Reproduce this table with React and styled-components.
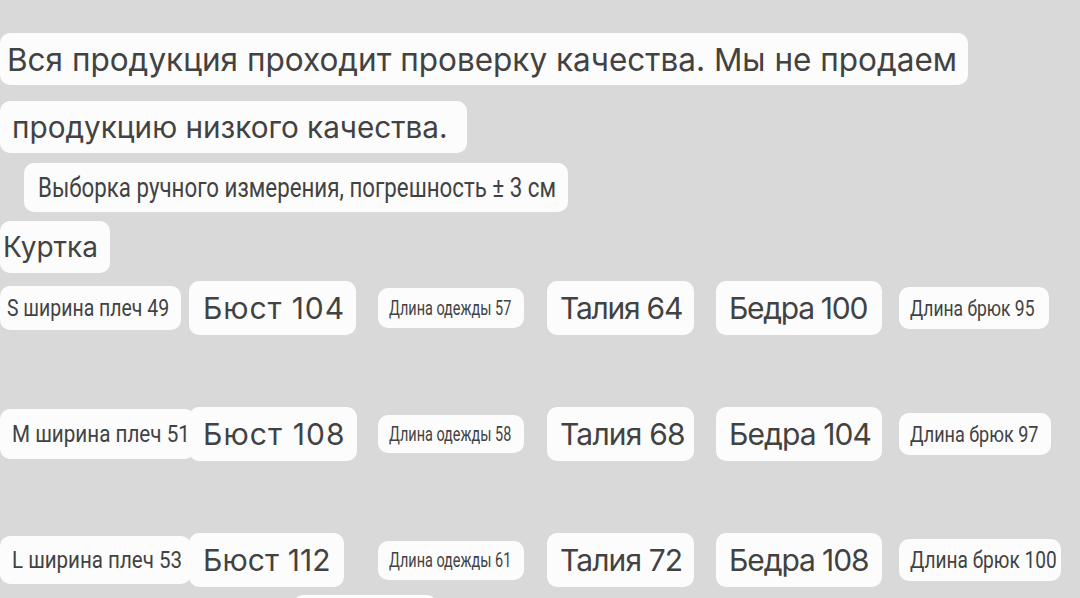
import React from 'react';
import styled, { createGlobalStyle } from 'styled-components';

const GlobalStyle = createGlobalStyle`
  html, body {
    margin: 0;
    padding: 0;
    background: #d9d9d9;
  }
  body {
    font-family: Inter, Roboto, sans-serif;
    color: #424242;
  }
`;

const Page = styled.div`
  display: flex;
  flex-direction: column;
  align-items: flex-start;
  width: 1080px;
  height: 598px;
  overflow: hidden;
  box-sizing: border-box;
  padding-top: 33px;
`;

const Chip = styled.div`
  display: inline-flex;
  flex-shrink: 0;
  align-items: center;
  background: #fcfcfc;
  border-radius: 10px;
  white-space: nowrap;
  box-sizing: border-box;
  height: ${(p) => p.h}px;
  width: ${(p) => (p.w ? `${p.w}px` : 'auto')};
  padding: 0 ${(p) => p.px ?? 12}px;
  margin-left: ${(p) => p.ml || 0}px;
  margin-top: ${(p) => p.mt || 0}px;
  font-size: ${(p) => p.size}px;
  letter-spacing: ${(p) => p.ls || 0}px;
`;

const Narrow = styled(Chip)`
  font-family: Roboto, sans-serif;
`;

// condensed lettering: Roboto squeezed horizontally
const Squeeze = styled.span`
  display: inline-block;
  transform: scaleX(${(p) => p.k});
  transform-origin: left center;
`;

const SizeGrid = styled.div`
  display: grid;
  grid-template-columns: 189px 189px 169px 169px 183px auto;
  align-items: center;
  flex-shrink: 0;
  height: 60px;
  margin-top: ${(p) => p.mt}px;
  width: 1080px;

  & > * {
    justify-self: start;
  }
`;

const Tail = styled(Chip)`
  margin-left: 293px;
`;

const rows = [
  {
    size: 'S', mt: 5,
    shoulder: { v: 49, w: 181, h: 44, px: 7, k: 0.81 },
    bust: { v: 104, w: 167, ls: 0.9 },
    length: { v: 57, h: 40 },
    waist: { v: 64, ls: -1.25 },
    hips: { v: 100, ls: -1.3 },
    pants: { v: 95, w: 150, size: 22, k: 0.795 },
  },
  {
    size: 'M', mt: 66,
    shoulder: { v: 51, w: 195, h: 50, px: 12, k: 0.86 },
    bust: { v: 108, w: 168, ls: 1.1 },
    length: { v: 58, h: 38 },
    waist: { v: 68, ls: -0.8 },
    hips: { v: 104, ls: -0.9 },
    pants: { v: 97, w: 152, size: 22, k: 0.82 },
  },
  {
    size: 'L', mt: 66,
    shoulder: { v: 53, w: 191, h: 48, px: 12, k: 0.855 },
    bust: { v: 112, w: 155, ls: 0.1 },
    length: { v: 61, h: 39 },
    waist: { v: 72, ls: -0.9 },
    hips: { v: 108, ls: -1.1 },
    pants: { v: 100, w: 162, size: 23, k: 0.83 },
  },
];

export default function App() {
  return (
    <>
      <GlobalStyle />
      <Page>
        <Chip h={52} size={31.5} px={7} w={968}>
          Вся продукция проходит проверку качества. Мы не продаем
        </Chip>
        <Chip h={52} size={29.7} px={12} w={467} mt={16}>
          продукцию низкого качества.
        </Chip>
        <Narrow h={49} size={27} px={14} ml={24} mt={10} w={544}>
          <Squeeze k={0.826}>Выборка ручного измерения, погрешность ± 3 см</Squeeze>
        </Narrow>
        <Chip h={52} size={28} px={3} mt={9} w={110}>
          Куртка
        </Chip>
        {rows.map((r) => (
          <SizeGrid key={r.size} mt={r.mt}>
            <Narrow h={r.shoulder.h} size={24} px={r.shoulder.px} w={r.shoulder.w}>
              <Squeeze k={r.shoulder.k}>
                {r.size} ширина плеч {r.shoulder.v}
              </Squeeze>
            </Narrow>
            <Chip h={54} size={30} px={14} w={r.bust.w} ls={r.bust.ls}>
              Бюст {r.bust.v}
            </Chip>
            <Narrow h={r.length.h} size={19.5} px={11} w={146}>
              <Squeeze k={0.74}>Длина одежды {r.length.v}</Squeeze>
            </Narrow>
            <Chip h={54} size={30} px={13} w={147} ls={r.waist.ls}>
              Талия {r.waist.v}
            </Chip>
            <Chip h={54} size={30} px={13} w={166} ls={r.hips.ls}>
              Бедра {r.hips.v}
            </Chip>
            <Narrow h={42} size={r.pants.size} px={11} w={r.pants.w}>
              <Squeeze k={r.pants.k}>Длина брюк {r.pants.v}</Squeeze>
            </Narrow>
          </SizeGrid>
        ))}
        <Tail h={40} size={20} mt={5} w={144} />
      </Page>
    </>
  );
}
